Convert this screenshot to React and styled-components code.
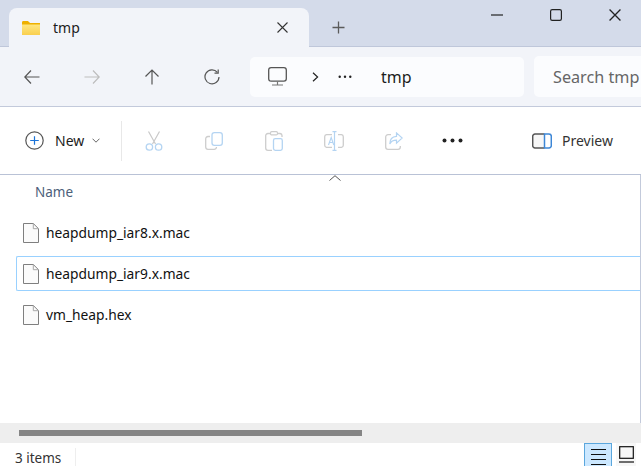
import styled, { createGlobalStyle } from "styled-components";

const GlobalStyle = createGlobalStyle`
  html, body {
    margin: 0;
    padding: 0;
    overflow: hidden;
    background: #fff;
  }
`;

const Window = styled.div`
  width: 641px;
  height: 466px;
  display: flex;
  flex-direction: column;
  overflow: hidden;
  font-family: "Noto Sans", "Open Sans", sans-serif;
  color: #1c1c1c;
`;

const TitleBar = styled.div`
  height: 46px;
  flex: none;
  display: flex;
  background: #d4dbea;
  border-bottom: 1px solid #bfc7da;
`;

const Tab = styled.div`
  width: 300px;
  margin: 8px 0 -1px 9px;
  padding: 0 21px 0 12px;
  box-sizing: border-box;
  display: flex;
  align-items: center;
  background: #f2f4f9;
  border-radius: 8px 8px 0 0;
  font-size: 14px;
  position: relative;
`;

const TabTitle = styled.span`
  margin-left: 12px;
  flex: 1;
  margin-top: -1px;
`;

const NewTab = styled.div`
  width: 58px;
  height: 38px;
  margin-top: 8px;
  display: flex;
  align-items: center;
  justify-content: center;
`;

const WindowControls = styled.div`
  margin-left: auto;
  margin-right: -3px;
  display: flex;
  height: 30px;
`;

const WindowButton = styled.div`
  width: 59px;
  height: 30px;
  display: flex;
  align-items: center;
  justify-content: center;
`;

const NavBar = styled.div`
  height: 59px;
  flex: none;
  display: flex;
  align-items: center;
  padding-left: 2px;
  background: #f2f4f9;
  border-bottom: 1px solid #c3cadb;
`;

const NavButton = styled.div`
  width: 60px;
  height: 40px;
  flex: none;
  display: flex;
  align-items: center;
  justify-content: center;
`;

const AddressBox = styled.div`
  width: 274px;
  height: 40px;
  margin-left: 8px;
  flex: none;
  display: flex;
  align-items: center;
  background: #fbfcfe;
  border-radius: 5px;
  font-size: 14px;
`;

const Crumb = styled.div`
  width: ${(p) => p.$width}px;
  flex: none;
  display: flex;
  justify-content: center;
  align-items: center;
`;

const AddressText = styled.span`
  margin-left: 16px;
  font-size: 16px;
`;

const SearchBox = styled.div`
  width: 160px;
  height: 41px;
  margin-left: 10px;
  flex: none;
  padding-left: 19px;
  box-sizing: border-box;
  display: flex;
  align-items: center;
  background: #fbfcfe;
  border-radius: 5px;
  font-size: 16.2px;
  color: #666;
`;

const CommandBar = styled.div`
  height: 67px;
  flex: none;
  display: flex;
  align-items: center;
  background: #fff;
  border-bottom: 1px solid #b9c2d6;
`;

const NewButton = styled.div`
  width: 121px;
  padding-left: 25px;
  box-sizing: border-box;
  display: flex;
  align-items: center;
  font-size: 14px;
`;

const NewLabel = styled.span`
  margin: 0 8px 0 11px;
`;

const Divider = styled.div`
  width: 1px;
  height: 40px;
  flex: none;
  background: #e8e8e8;
`;

const CommandButton = styled.div`
  width: 60px;
  flex: none;
  display: flex;
  justify-content: center;
  align-items: center;
`;

const ActionGroup = styled.div`
  display: flex;
  margin-left: 2px;
`;

const MoreButton = styled(CommandButton)`
  margin-left: -2px;
`;

const PreviewButton = styled.div`
  margin-left: 50px;
  display: flex;
  align-items: center;
  gap: 10px;
  font-size: 14px;
  color: #333;
`;

const FileArea = styled.div`
  flex: 1;
  min-height: 0;
  position: relative;
  background: #fff;
  border-right: 1px solid #c3cadb;
`;

const ColumnHeader = styled.div`
  height: 34px;
  display: flex;
  align-items: center;
  padding-left: 35px;
  font-size: 13.5px;
  color: #4c607a;
`;

const SortCaret = styled.svg`
  position: absolute;
  left: 329px;
  top: 0;
`;

const FileList = styled.div`
  margin-top: 6px;
  padding-left: 16px;
  display: flex;
  flex-direction: column;
  gap: 6px;
`;

const FileRow = styled.div`
  height: 35px;
  box-sizing: border-box;
  display: flex;
  align-items: center;
  gap: 7px;
  padding-left: 6px;
  border: 1px solid ${(p) => (p.$focused ? "#99d1ff" : "transparent")};
  border-right: none;
  border-radius: 2px 0 0 2px;
  font-size: 13.8px;
  color: #111;
`;

const ScrollTrack = styled.div`
  height: 20px;
  flex: none;
  display: flex;
  align-items: center;
  padding-left: 19px;
  background: #eeeeee;
`;

const ScrollThumb = styled.div`
  width: 343px;
  height: 6px;
  background: #858585;
`;

const StatusBar = styled.div`
  height: 23px;
  flex: none;
  display: flex;
  align-items: center;
  padding-left: 15px;
  background: #fff;
  font-size: 13.5px;
  color: #333;
`;

const StatusText = styled.span`
  width: 60px;
  margin-top: 6px;
`;

const StatusDivider = styled.div`
  width: 1px;
  height: 18px;
  margin-top: 5px;
  background: #eee;
`;

const ViewToggle = styled.div`
  margin-left: auto;
  margin-right: 5px;
  display: flex;
  gap: 4px;
`;

const ViewButton = styled.div`
  width: ${(p) => (p.$active ? 28 : 20)}px;
  height: 23px;
  box-sizing: border-box;
  display: flex;
  justify-content: center;
  padding-top: ${(p) => (p.$active ? 4 : 3)}px;
  background: ${(p) => (p.$active ? "#cce8ff" : "#f7f7f7")};
  border: ${(p) => (p.$active ? "1px solid #5ba7dd" : "none")};
  border-bottom: none;
`;

const FolderIcon = () => (
  <svg width="20" height="16" viewBox="0 0 20 16">
    <defs>
      <linearGradient id="folderFill" x1="0" y1="0" x2="0" y2="1">
        <stop offset="0" stopColor="#ffe680" />
        <stop offset="1" stopColor="#f9cf4f" />
      </linearGradient>
    </defs>
    <path d="M1 2.5C1 1.7 1.5 1 2.3 1h4.6l2.2 2H19v2H1z" fill="#eeb000" />
    <path d="M1 4.5h18V15H1z" fill="url(#folderFill)" />
  </svg>
);

const CloseIcon = ({ size = 11, color = "#333", width = 1.1 }) => (
  <svg width={size} height={size} viewBox="0 0 11 11">
    <path d="M.5.5l10 10M10.500.5l-10 10" stroke={color} strokeWidth={width} fill="none" />
  </svg>
);

const PlusIcon = () => (
  <svg width="13" height="13" viewBox="0 0 13 13">
    <path d="M6.500.5v12M.5 6.500h12" stroke="#5b5b5b" strokeWidth="1.300" fill="none" />
  </svg>
);

const MinimizeIcon = () => (
  <svg width="12" height="2" viewBox="0 0 12 2">
    <path d="M0 1h12" stroke="#222" strokeWidth="1.200" />
  </svg>
);

const MaximizeIcon = () => (
  <svg width="12" height="12" viewBox="0 0 12 12">
    <rect x=".6" y=".6" width="10.800" height="10.800" rx="1.600" stroke="#222" strokeWidth="1.200" fill="none" />
  </svg>
);

const ArrowIcon = ({ direction, color }) => {
  const paths = {
    left: "M15.500 8H.8M7 1.500L.8 8 7 14.500",
    right: "M.5 8h14.700M9 1.500L15.200 8 9 14.500",
    up: "M8 15.500V1M1.500 7.500L8 1l6.500 6.500",
  };
  return (
    <svg width="16" height="16" viewBox="0 0 16 16">
      <path d={paths[direction]} stroke={color} strokeWidth="1.200" fill="none" />
    </svg>
  );
};

const RefreshIcon = () => (
  <svg width="16" height="16" viewBox="0 0 16 16">
    <path d="M13.400 3.400A7 7 0 1 0 15 8" stroke="#555" strokeWidth="1.200" fill="none" />
    <path d="M14.200.6v3.600h-3.700" stroke="#555" strokeWidth="1.200" fill="none" />
  </svg>
);

const MonitorIcon = () => (
  <svg width="19" height="19" viewBox="0 0 19 19">
    <rect x=".7" y=".7" width="17.600" height="13.400" rx="2.400" stroke="#555" strokeWidth="1.300" fill="none" />
    <path d="M9.500 14.500v3M4 18h11" stroke="#777" strokeWidth="1.200" fill="none" />
  </svg>
);

const ChevronRight = () => (
  <svg width="7" height="10" viewBox="0 0 7 10">
    <path d="M1 .7L5.600 5 1 9.300" stroke="#222" strokeWidth="1.200" fill="none" />
  </svg>
);

const Dots = ({ size = 14, r = 1.2, color = "#222" }) => (
  <svg width={size} height={r * 2 + 1} viewBox={`0 0 ${size} ${r * 2 + 1}`}>
    {[r + 0.5, size / 2, size - r - 0.5].map((cx) => (
      <circle key={cx} cx={cx} cy={r + 0.5} r={r} fill={color} />
    ))}
  </svg>
);

const NewIcon = () => (
  <svg width="19" height="19" viewBox="0 0 19 19">
    <circle cx="9.500" cy="9.500" r="8.700" stroke="#555" strokeWidth="1.200" fill="none" />
    <path d="M9.500 5.200v8.600M5.200 9.500h8.600" stroke="#1a73d8" strokeWidth="1.200" fill="none" />
  </svg>
);

const ChevronDown = () => (
  <svg width="8" height="5" viewBox="0 0 8 5">
    <path d="M.5.7L4 4.200 7.500.7" stroke="#666" strokeWidth="1" fill="none" />
  </svg>
);

const CutIcon = () => (
  <svg width="18" height="20" viewBox="0 0 18 20">
    <path d="M3.500.5L10.500 13M14.500.5L7.500 13" stroke="#c9c9c9" strokeWidth="1.200" fill="none" />
    <circle cx="4.400" cy="16" r="3.200" stroke="#b4d4f2" strokeWidth="1.300" fill="none" />
    <circle cx="13.600" cy="16" r="3.200" stroke="#b4d4f2" strokeWidth="1.300" fill="none" />
  </svg>
);

const CopyIcon = () => (
  <svg width="18" height="18" viewBox="0 0 18 18">
    <path d="M5 4.500H3A2.400 2.400 0 0 0 .7 7v8A2.400 2.400 0 0 0 3 17.300h6A2.400 2.400 0 0 0 11.500 15" stroke="#cdcdcd" strokeWidth="1.300" fill="none" />
    <rect x="7" y=".7" width="10.300" height="12.600" rx="2.400" stroke="#b4d4f2" strokeWidth="1.300" fill="#fff" />
  </svg>
);

const PasteIcon = () => (
  <svg width="18" height="20" viewBox="0 0 18 20">
    <path d="M5 2.500H3A2.300 2.300 0 0 0 .7 5v12A2.300 2.300 0 0 0 3 19.300h4M13 2.500h2A2.300 2.300 0 0 1 17 5v1" stroke="#cdcdcd" strokeWidth="1.300" fill="none" />
    <rect x="5.500" y=".7" width="7" height="3.200" rx="1.200" stroke="#cdcdcd" strokeWidth="1.200" fill="none" />
    <rect x="8.500" y="7.700" width="8.800" height="11.600" rx="1.800" stroke="#b4d4f2" strokeWidth="1.300" fill="none" />
  </svg>
);

const RenameIcon = () => (
  <svg width="20" height="20" viewBox="0 0 20 20">
    <path d="M8 3.700H2.500A2 2 0 0 0 .7 5.700v8.600a2 2 0 0 0 1.800 2H8M14 3.700h3.500a2 2 0 0 1 1.800 2v8.600a2 2 0 0 1-1.800 2H14" stroke="#cdcdcd" strokeWidth="1.300" fill="none" />
    <path d="M8.500.7h4M8.500 19.300h4M10.500.7v18.600" stroke="#b4d4f2" strokeWidth="1.200" fill="none" />
    <path d="M4.500 14L7.200 6.500 9.800 14M5.400 11.500h3.600" stroke="#b4d4f2" strokeWidth="1.100" fill="none" />
  </svg>
);

const ShareIcon = () => (
  <svg width="18" height="18" viewBox="0 0 18 18">
    <path d="M6 2.700H3A2.300 2.300 0 0 0 .7 5v10A2.300 2.300 0 0 0 3 17.300h10a2.300 2.300 0 0 0 2.300-2.300v-1" stroke="#cdcdcd" strokeWidth="1.300" fill="none" />
    <path d="M11.500.9L17.200 6l-5.700 5.200V8.200C8.300 8.200 6 9.500 4.800 12c0-4.500 2.500-7.400 6.700-7.600z" stroke="#b4d4f2" strokeWidth="1.200" fill="#fff" />
  </svg>
);

const PreviewIcon = () => (
  <svg width="20" height="16" viewBox="0 0 20 16">
    <path d="M12.500 1H3a2.300 2.300 0 0 0-2.300 2.300v9.400A2.300 2.300 0 0 0 3 15h9.500" stroke="#555" strokeWidth="1.500" fill="#f7f7f7" />
    <path d="M12.500 1H17a2.300 2.300 0 0 1 2.300 2.300v9.400A2.300 2.300 0 0 1 17 15h-4.500z" stroke="#3c86d6" strokeWidth="1.500" fill="#fff" />
  </svg>
);

const FileIcon = () => (
  <svg width="16" height="20" viewBox="0 0 16 20" style={{ flex: "none" }}>
    <path d="M.5.5h9.800l5.200 5.200v13.800H.5z" fill="#fbfbfb" stroke="#7f7f7f" />
    <path d="M10.300.5v5.200h5.200" fill="none" stroke="#a8a8a8" />
  </svg>
);

const ListViewIcon = () => (
  <svg width="17" height="18" viewBox="0 0 17 18">
    <path d="M1 1.500h15M1 6.500h15M1 11.500h15M1 16.500h15" stroke="#111" strokeWidth="1.200" />
  </svg>
);

const TileViewIcon = () => (
  <svg width="15" height="18" viewBox="0 0 15 18">
    <rect x=".7" y=".7" width="13.600" height="11.600" stroke="#111" strokeWidth="1.200" fill="none" />
    <path d="M0 16h15" stroke="#111" strokeWidth="1.200" />
  </svg>
);

const files = [
  { name: "heapdump_iar8.x.mac" },
  { name: "heapdump_iar9.x.mac", focused: true },
  { name: "vm_heap.hex" },
];

const App = () => {
  return (
    <Window>
      <GlobalStyle />
      <TitleBar>
        <Tab>
          <FolderIcon />
          <TabTitle>tmp</TabTitle>
          <CloseIcon />
        </Tab>
        <NewTab>
          <PlusIcon />
        </NewTab>
        <WindowControls>
          <WindowButton><MinimizeIcon /></WindowButton>
          <WindowButton><MaximizeIcon /></WindowButton>
          <WindowButton><CloseIcon size={12} color="#222" width={1.2} /></WindowButton>
        </WindowControls>
      </TitleBar>

      <NavBar>
        <NavButton><ArrowIcon direction="left" color="#555" /></NavButton>
        <NavButton><ArrowIcon direction="right" color="#bdbdbd" /></NavButton>
        <NavButton><ArrowIcon direction="up" color="#555" /></NavButton>
        <NavButton><RefreshIcon /></NavButton>
        <AddressBox>
          <Crumb $width={55}><MonitorIcon /></Crumb>
          <Crumb $width={20}><ChevronRight /></Crumb>
          <Crumb $width={40}><Dots /></Crumb>
          <AddressText>tmp</AddressText>
        </AddressBox>
        <SearchBox>Search tmp</SearchBox>
      </NavBar>

      <CommandBar>
        <NewButton>
          <NewIcon />
          <NewLabel>New</NewLabel>
          <ChevronDown />
        </NewButton>
        <Divider />
        <ActionGroup>
          <CommandButton><CutIcon /></CommandButton>
          <CommandButton><CopyIcon /></CommandButton>
          <CommandButton><PasteIcon /></CommandButton>
          <CommandButton><RenameIcon /></CommandButton>
          <CommandButton><ShareIcon /></CommandButton>
          <MoreButton><Dots size={21} r={2} color="#222" /></MoreButton>
        </ActionGroup>
        <PreviewButton>
          <PreviewIcon />
          Preview
        </PreviewButton>
      </CommandBar>

      <FileArea>
        <SortCaret width="12" height="6" viewBox="0 0 12 6">
          <path d="M.5 5.500L6 .7l5.500 4.800" stroke="#555" strokeWidth="1" fill="none" />
        </SortCaret>
        <ColumnHeader>Name</ColumnHeader>
        <FileList>
          {files.map((file) => (
            <FileRow key={file.name} $focused={file.focused}>
              <FileIcon />
              {file.name}
            </FileRow>
          ))}
        </FileList>
      </FileArea>

      <ScrollTrack>
        <ScrollThumb />
      </ScrollTrack>

      <StatusBar>
        <StatusText>3 items</StatusText>
        <StatusDivider />
        <ViewToggle>
          <ViewButton $active><ListViewIcon /></ViewButton>
          <ViewButton><TileViewIcon /></ViewButton>
        </ViewToggle>
      </StatusBar>
    </Window>
  );
};

export default App;
